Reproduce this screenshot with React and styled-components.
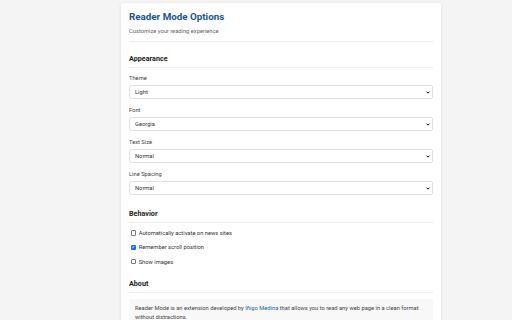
import React from "react";
import styled, { createGlobalStyle } from "styled-components";

const GlobalStyle = createGlobalStyle`
  html, body {
    margin: 0;
    padding: 0;
    background: #f4f4f4;
    font-family: Roboto, "Liberation Sans", Arial, sans-serif;
  }
`;

const Page = styled.div`
  height: 320px;
  overflow: hidden;
  padding: 3px 0 0 121px;
  box-sizing: border-box;
`;

const Card = styled.div`
  width: 320px;
  box-sizing: border-box;
  background: #fff;
  border-radius: 3px;
  box-shadow: 0 1px 4px rgba(0, 0, 0, 0.08);
  padding: 8px 8px 12px;
`;

const Header = styled.div`
  padding-bottom: 6px;
  border-bottom: 1px solid #eee;
  margin-bottom: 12px;
`;

const Title = styled.h1`
  margin: 0;
  font-size: 9.8px;
  line-height: 12px;
  font-weight: 700;
  color: #1a5490;
`;

const Subtitle = styled.p`
  margin: 4px 0 0;
  font-size: 5.75px;
  line-height: 8px;
  color: #666;
`;

const Section = styled.section`
  display: flex;
  flex-direction: column;
  margin-bottom: 7px;
`;

const SectionTitle = styled.h2`
  margin: 0 0 6px;
  padding-bottom: 3px;
  border-bottom: 1px solid #eee;
  font-size: 7.2px;
  line-height: 10px;
  font-weight: 700;
  color: #222;
`;

const Group = styled.div`
  margin-bottom: 7px;
`;

const Label = styled.label`
  display: block;
  margin-bottom: 3px;
  font-size: 5.75px;
  line-height: 8px;
  color: #444;
`;

const SelectWrap = styled.div`
  position: relative;
`;

const Select = styled.select`
  display: block;
  width: 100%;
  height: 14px;
  box-sizing: border-box;
  padding: 0 5px;
  border: 1px solid #e0e0e0;
  border-radius: 2px;
  background: #fff;
  appearance: none;
  -webkit-appearance: none;
  font-family: inherit;
  font-size: 5.75px;
  color: #333;
  outline: none;
`;

const Arrow = styled.svg`
  position: absolute;
  right: 3px;
  top: 5.5px;
  width: 4px;
  height: 3px;
  pointer-events: none;
`;

const CheckRow = styled.label`
  display: flex;
  align-items: center;
  gap: 3px;
  height: 8px;
  margin-bottom: 6.3px;
  font-size: 5.75px;
  color: #333;
`;

const Box = styled.span`
  display: flex;
  align-items: center;
  justify-content: center;
  width: 5.2px;
  height: 5.2px;
  margin-left: 1.5px;
  box-sizing: border-box;
  border-radius: 1px;
  border: ${(p) => (p.$on ? "none" : "0.6px solid #767676")};
  background: ${(p) => (p.$on ? "#0075ff" : "#fff")};
`;

const AboutBox = styled.div`
  padding: 5px 6px 6px;
  background: #f8f8f8;
  border-radius: 2px;
  font-size: 5.75px;
  line-height: 9px;
  color: #444;
`;

const Link = styled.a`
  color: #1a5fa8;
  text-decoration: none;
`;

const selects = [
  { label: "Theme", value: "Light", options: ["Light", "Dark", "Sepia"] },
  { label: "Font", value: "Georgia", options: ["Georgia", "Arial", "Verdana"] },
  { label: "Text Size", value: "Normal", options: ["Small", "Normal", "Large"] },
  { label: "Line Spacing", value: "Normal", options: ["Compact", "Normal", "Relaxed"] },
];

const checks = [
  { label: "Automatically activate on news sites", checked: false },
  { label: "Remember scroll position", checked: true },
  { label: "Show images", checked: false },
];

export default function App() {
  return (
    <>
      <GlobalStyle />
      <Page>
        <Card>
          <Header>
            <Title>Reader Mode Options</Title>
            <Subtitle>Customize your reading experience</Subtitle>
          </Header>

          <Section>
            <SectionTitle>Appearance</SectionTitle>
            {selects.map((s) => (
              <Group key={s.label}>
                <Label>{s.label}</Label>
                <SelectWrap>
                  <Select defaultValue={s.value}>
                    {s.options.map((o) => (
                      <option key={o}>{o}</option>
                    ))}
                  </Select>
                  <Arrow viewBox="0 0 4 3">
                    <path d="M0.5 0.6 L2 2.2 L3.5 0.6" fill="none" stroke="#111" strokeWidth="1" />
                  </Arrow>
                </SelectWrap>
              </Group>
            ))}
          </Section>

          <Section>
            <SectionTitle>Behavior</SectionTitle>
            {checks.map((c) => (
              <CheckRow key={c.label}>
                <Box $on={c.checked}>
                  {c.checked && (
                    <svg width="4" height="4" viewBox="0 0 4 4">
                      <path d="M0.7 2 L1.6 2.9 L3.3 1" fill="none" stroke="#fff" strokeWidth="0.8" />
                    </svg>
                  )}
                </Box>
                {c.label}
              </CheckRow>
            ))}
          </Section>

          <Section>
            <SectionTitle>About</SectionTitle>
            <AboutBox>
              Reader Mode is an extension developed by{" "}
              <Link href="#">Íñigo Medina</Link> that allows you to read any web
              page in a clean format without distractions.
            </AboutBox>
          </Section>
        </Card>
      </Page>
    </>
  );
}
